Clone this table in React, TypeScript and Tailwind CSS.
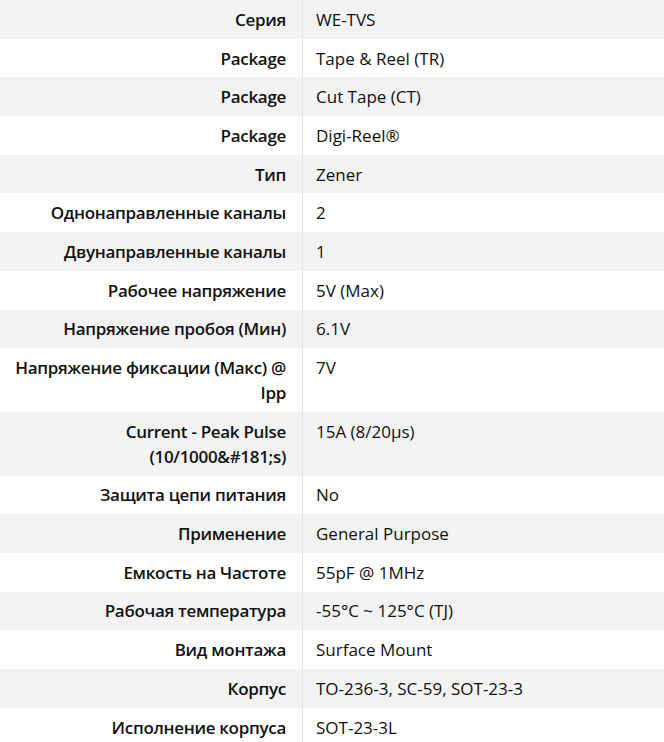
import React from "react";

interface SpecRow {
  label: string;
  value: string;
}

const ROWS: SpecRow[] = [
  { label: "Серия", value: "WE-TVS" },
  { label: "Package", value: "Tape & Reel (TR)" },
  { label: "Package", value: "Cut Tape (CT)" },
  { label: "Package", value: "Digi-Reel®" },
  { label: "Тип", value: "Zener" },
  { label: "Однонаправленные каналы", value: "2" },
  { label: "Двунаправленные каналы", value: "1" },
  { label: "Рабочее напряжение", value: "5V (Max)" },
  { label: "Напряжение пробоя (Мин)", value: "6.1V" },
  { label: "Напряжение фиксации (Макс) @ Ipp", value: "7V" },
  { label: "Current - Peak Pulse (10/1000&#181;s)", value: "15A (8/20µs)" },
  { label: "Защита цепи питания", value: "No" },
  { label: "Применение", value: "General Purpose" },
  { label: "Емкость на Частоте", value: "55pF @ 1MHz" },
  { label: "Рабочая температура", value: "-55°C ~ 125°C (TJ)" },
  { label: "Вид монтажа", value: "Surface Mount" },
  { label: "Корпус", value: "TO-236-3, SC-59, SOT-23-3" },
  { label: "Исполнение корпуса", value: "SOT-23-3L" },
];

export default function App() {
  return (
    <div
      className="w-[664px] h-[742px] overflow-hidden bg-white text-[17px] text-[#111111]"
      style={{ fontFamily: "'Open Sans', 'Noto Sans', 'Liberation Sans', sans-serif" }}
    >
      {ROWS.map((row, i) => (
        <div
          key={i}
          className={"flex " + (i % 2 === 0 ? "bg-[#f3f3f3]" : "bg-white")}
        >
          {/* Label */}
          <div className="w-[303px] shrink-0 border-r border-[#e3e3e3] pl-2 pr-4 py-[6.85px] text-right font-semibold tracking-[-0.3px] leading-[25px]">
            {row.label}
          </div>
          {/* Value */}
          <div className="flex-1 pl-[13px] pr-4 py-[6.85px] leading-[25px]">
            {row.value}
          </div>
        </div>
      ))}
    </div>
  );
}
